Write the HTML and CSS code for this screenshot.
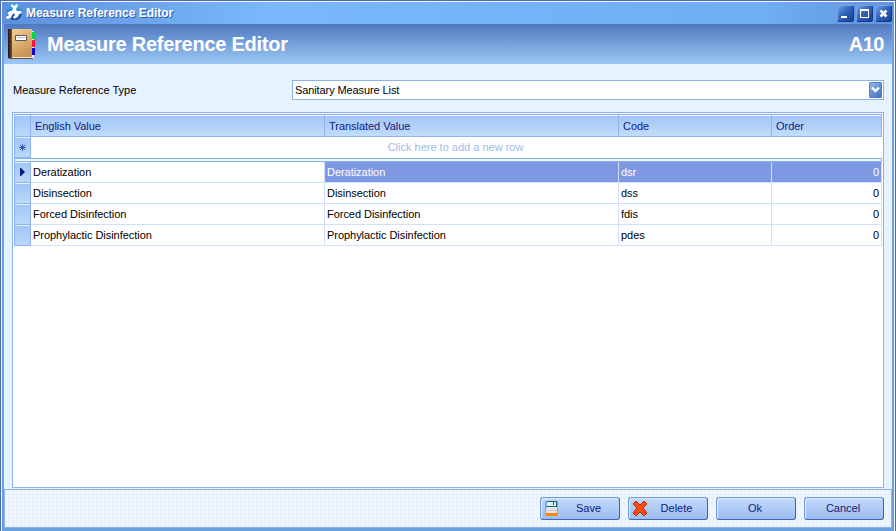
FILE: index.html
```
<!DOCTYPE html>
<html lang="en">
<head>
<meta charset="utf-8">
<title>Measure Reference Editor</title>
<link rel="stylesheet" href="styles.css">
</head>
<body>
<div class="window">
  <div class="titlebar">
    <svg class="app-icon" width="17" height="17" viewBox="0 0 17 17"><defs><linearGradient id="orb" x2="0" y2="1"><stop stop-color="#4cb4ef"/><stop offset=".5" stop-color="#2181cc"/><stop offset="1" stop-color="#082a94"/></linearGradient></defs><circle cx="8.5" cy="8" r="8" fill="url(#orb)"/><path d="M5 0l3 2 3-2 1 1-2 4 1 2 4 0 1 2-3 1-1 3-4 2-1-2 2-2-1-2-2 2-1 3-4 1-1-2 3-2-2-2 3-2 2 0 1-3-2-2z" fill="#fff"/></svg>
    <span class="caption">Measure Reference Editor</span>
    <div class="controls">
      <span class="control"><svg width="17" height="17" viewBox="0 0 17 17"><path d="M4 11h6v2H4z" fill="#fff"/></svg></span>
      <span class="control"><svg width="17" height="17" viewBox="0 0 17 17"><path d="M4 4h9v9H4zM5 6v6h7V6z" fill="#fff" fill-rule="evenodd"/></svg></span>
      <span class="control"><svg width="17" height="17" viewBox="0 0 17 17"><path d="M5.5 5.5l6 6M11.5 5.5l-6 6" stroke="#fff" stroke-width="2.5"/></svg></span>
    </div>
  </div>
  <header class="header">
    <svg class="book" width="28" height="32" viewBox="0 0 28 32"><defs><linearGradient id="cover" x2=".4" y2="1"><stop stop-color="#f4cf90"/><stop offset="1" stop-color="#cb9558"/></linearGradient><linearGradient id="spine"><stop stop-color="#201510"/><stop offset="1" stop-color="#69503c"/></linearGradient></defs><path d="M2 28h24v2H2z" fill="#eee6d5"/><path d="M1 29h24v1H1z" fill="#655345"/><path d="M24 2h2v27h-2z" fill="#f5eedf"/><path d="M4 0h20v28H4z" fill="url(#cover)"/><path d="M0 0h4v29H0z" fill="url(#spine)"/><path d="M7.5 6.5h11v5h-11z" fill="#fff" stroke="#5c5960"/><path d="M9 8h8v1H9z" fill="#bbb"/><path d="M24 3h3v7h-3z" fill="#00d83b"/><path d="M24 11h3v7h-3z" fill="#ff153f"/><path d="M24 19h3v7h-3z" fill="#1000d8"/></svg>
    <h1 class="title">Measure Reference Editor</h1>
    <span class="form-code">A10</span>
  </header>
  <main class="body">
    <div class="field">
      <span class="label">Measure Reference Type</span>
      <div class="combo"><span class="combo-text">Sanitary Measure List</span><span class="drop"><svg width="13" height="15" viewBox="0 0 13 15"><path d="M3 5.5L6.5 9 10 5.5" fill="none" stroke="#fff" stroke-width="2.4"/></svg></span></div>
    </div>
    <div class="grid">
      <div class="row head"><span class="ind"></span><span class="cell">English Value</span><span class="cell">Translated Value</span><span class="cell">Code</span><span class="cell">Order</span></div>
      <div class="row new"><span class="ind"><svg width="9" height="9" viewBox="0 0 9 9"><path d="M4.5 1v7M1 4.5h7M2 2l5 5M7 2L2 7" stroke="#1c3c98" stroke-width=".8"/></svg></span><span class="hint">Click here to add a new row</span></div>
      <div class="divider"></div>
      <div class="row data selected"><span class="ind"><svg width="5" height="8" viewBox="0 0 5 8"><path d="M0 0h1l4 4-4 4H0z" fill="#0a2080"/></svg></span><span class="cell">Deratization</span><span class="cell">Deratization</span><span class="cell">dsr</span><span class="cell num">0</span></div>
      <div class="row data"><span class="ind"></span><span class="cell">Disinsection</span><span class="cell">Disinsection</span><span class="cell">dss</span><span class="cell num">0</span></div>
      <div class="row data"><span class="ind"></span><span class="cell">Forced Disinfection</span><span class="cell">Forced Disinfection</span><span class="cell">fdis</span><span class="cell num">0</span></div>
      <div class="row data"><span class="ind"></span><span class="cell">Prophylactic Disinfection</span><span class="cell">Prophylactic Disinfection</span><span class="cell">pdes</span><span class="cell num">0</span></div>
    </div>
  </main>
  <footer class="footer">
    <button class="btn with-icon"><svg width="16" height="17" viewBox="0 0 16 17"><path d="M1 1h13v14H1z" fill="#6db0df"/><path d="M3 1h10v7H3z" fill="#e4f1f2"/><path d="M3 1h10v1H3zM12 1h1v6h-1zM3 6h10v1H3z" fill="#17646e"/><path d="M9 2h1v3H9z" fill="#17646e"/><path d="M2 8h11v5H2z" fill="#e7e7e7"/><path d="M2 10h11v1H2z" fill="#c5c5c5"/><path d="M2 13h11v3H2z" fill="#ff8a0a"/></svg><span>Save</span></button>
    <button class="btn with-icon"><svg width="16" height="17" viewBox="0 0 16 17"><path d="M4 1l4 4 4-4 3 3-4 4 4 5-3 3-4-4-4 4-3-3 4-5-4-4z" fill="#ff4a0c" stroke="#a82d16" stroke-linejoin="round"/></svg><span>Delete</span></button>
    <button class="btn"><span>Ok</span></button>
    <button class="btn"><span>Cancel</span></button>
  </footer>
</div>
</body>
</html>
```
FILE: styles.css
```
* { box-sizing: border-box; }
body { margin: 0; font: 11px/13px "Liberation Sans", Arial, sans-serif; color: #000; overflow: hidden; }
svg { display: block; flex: none; }
.window { width: 896px; height: 531px; display: flex; flex-direction: column; border: 1px solid #4a6ab8; border-bottom: 0; box-shadow: inset 0 1px #fff, inset 1px 0 #f0f6ff, inset -1px 0 #f0f6ff; padding: 1px 3px 3px; background: #68a0e0; }
.titlebar { height: 22px; flex: none; margin: 0 -2px; display: flex; align-items: center; padding: 0 2px; background: linear-gradient(90deg, #5e90da, #7ab8fb 30%, #70aef5 85%, #6095dc); }
.app-icon { margin: 0 0 1px 2px; }
.caption { margin: 0 0 0 3px; font-weight: bold; font-size: 12px; letter-spacing: -.04px; color: #fff; text-shadow: 1px 1px #2856ac; white-space: nowrap; }
.controls { margin-left: auto; display: flex; gap: 2px; }
.control { width: 17px; height: 17px; border-radius: 3px; background: linear-gradient(135deg, #79a8e8, #3465bd 45%, #163d95); box-shadow: inset -1px -1px #153887, inset 1px 1px #78a5e6; }
.header { height: 40px; flex: none; display: flex; align-items: center; padding: 0 8px 0 4px; background: linear-gradient(#5178c0, #9bc8f6); color: #fff; }
.book { margin-top: 2px; }
.title { margin: 0 0 0 11px; font-size: 20px; line-height: 24px; letter-spacing: -.25px; white-space: nowrap; }
.form-code { margin-left: auto; font-weight: bold; font-size: 20px; line-height: 24px; letter-spacing: -.5px; }
.body { flex: 1; background: #e6f2ff; padding: 16px 8px 1px; display: flex; flex-direction: column; }
.field { display: flex; height: 20px; align-items: center; padding-left: 1px; }
.label { width: 279px; }
.combo { flex: 1; height: 20px; border: 1px solid #8db3ec; background: #fff; display: flex; align-items: center; justify-content: space-between; padding: 0 1px 0 2px; }
.combo-text { letter-spacing: -.1px; }
.drop { width: 13px; height: 16px; border-radius: 2px; background: linear-gradient(135deg, #9bbcec, #3768bb); box-shadow: inset 0 0 0 1px #537ec5; }
.grid { flex: 1; margin-top: 12px; border: 1px solid #8db3ec; background: #fff; padding: 1px; }
.row { display: grid; grid-template-columns: 17px 294px 294px 153px 110px; grid-template-rows: 100%; }
.ind { display: flex; align-items: center; justify-content: center; border: solid #8db3ec; border-width: 0 1px 1px; background: linear-gradient(#a0c5f4, #bdd8fb); box-shadow: inset 0 1px #e9f3ff; }
.cell { padding: 0 2px; line-height: 20px; white-space: nowrap; letter-spacing: -.04px; }
.head { height: 23px; border-top: 1px solid #8db3ec; }
.head .cell { border: solid #8db3ec; border-width: 0 1px 1px 0; background: linear-gradient(#a0c5f4, #c2dcfc); box-shadow: inset 0 1px #fff; padding: 1px 0 0 4px; color: #102080; }
.new { height: 21px; }
.new .hint { grid-column: 2 / 6; text-align: center; line-height: 21px; color: #a1bce5; padding-right: 2px; }
.divider { height: 4px; border: 1px solid #8db3ec; background: #eef6ff; }
.data { height: 21px; }
.data .cell { border: solid #cfe0fb; border-width: 0 1px 1px 0; }
.data .num { text-align: right; }
.selected .cell:nth-child(n + 3) { background: #7f98e4; color: #fff; }
.footer { height: 39px; flex: none; border: 1px solid #8db3ec; background: radial-gradient(circle, #f6faff 1px, transparent 1px) 0 0 / 4px 4px, #e8f3ff; display: flex; align-items: flex-start; justify-content: flex-end; gap: 8px; padding: 7px 7px 0; }
.btn { width: 80px; height: 23px; margin: 0; padding: 0 2px 0 0; border: 1px solid #6f99dd; border-right-color: #3e64b5; border-bottom-color: #3e64b5; border-radius: 3px; background: linear-gradient(#c3dafa, #9dbdf0); font: inherit; color: #102080; display: flex; align-items: center; justify-content: center; box-shadow: inset 1px 1px #dbe9fd; }
.with-icon { justify-content: flex-start; padding-left: 3px; }
.with-icon span { flex: 1; text-align: center; }
```
